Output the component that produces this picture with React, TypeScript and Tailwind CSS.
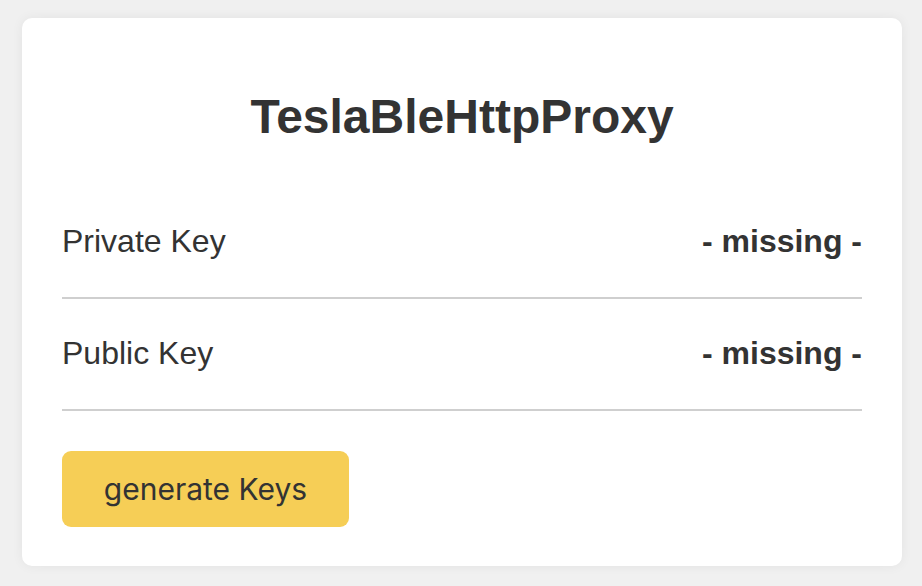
import React from 'react';

const rows = [
  { label: 'Private Key', value: '- missing -' },
  { label: 'Public Key', value: '- missing -' },
];

export default function App() {
  return (
    <div className="min-h-screen bg-[#f0f0f0] pt-[18px] pl-[22px] pr-[20px] pb-[21px] font-['Liberation_Sans',Arial,sans-serif] text-[#333]">
      <div className="bg-white rounded-[10px] shadow-[0_0_12px_rgba(0,0,0,0.06)] px-[40px] pt-[72px] pb-[39px]">
        <h1 className="text-center text-[48px] leading-[54px] font-bold mb-[43px]">TeslaBleHttpProxy</h1>
        {rows.map((r) => (
          <div key={r.label} className="flex justify-between items-center border-b-2 border-[#cfcfcf] pt-[36px] pb-[38px] text-[32px] leading-[36px]">
            <span>{r.label}</span>
            <span className="font-bold">{r.value}</span>
          </div>
        ))}
        <button className="mt-[40px] w-[287px] h-[76px] rounded-[9px] bg-[#f6ce56] text-[#333] text-[30px] font-['Inter',sans-serif]">
          generate Keys
        </button>
      </div>
    </div>
  );
}
